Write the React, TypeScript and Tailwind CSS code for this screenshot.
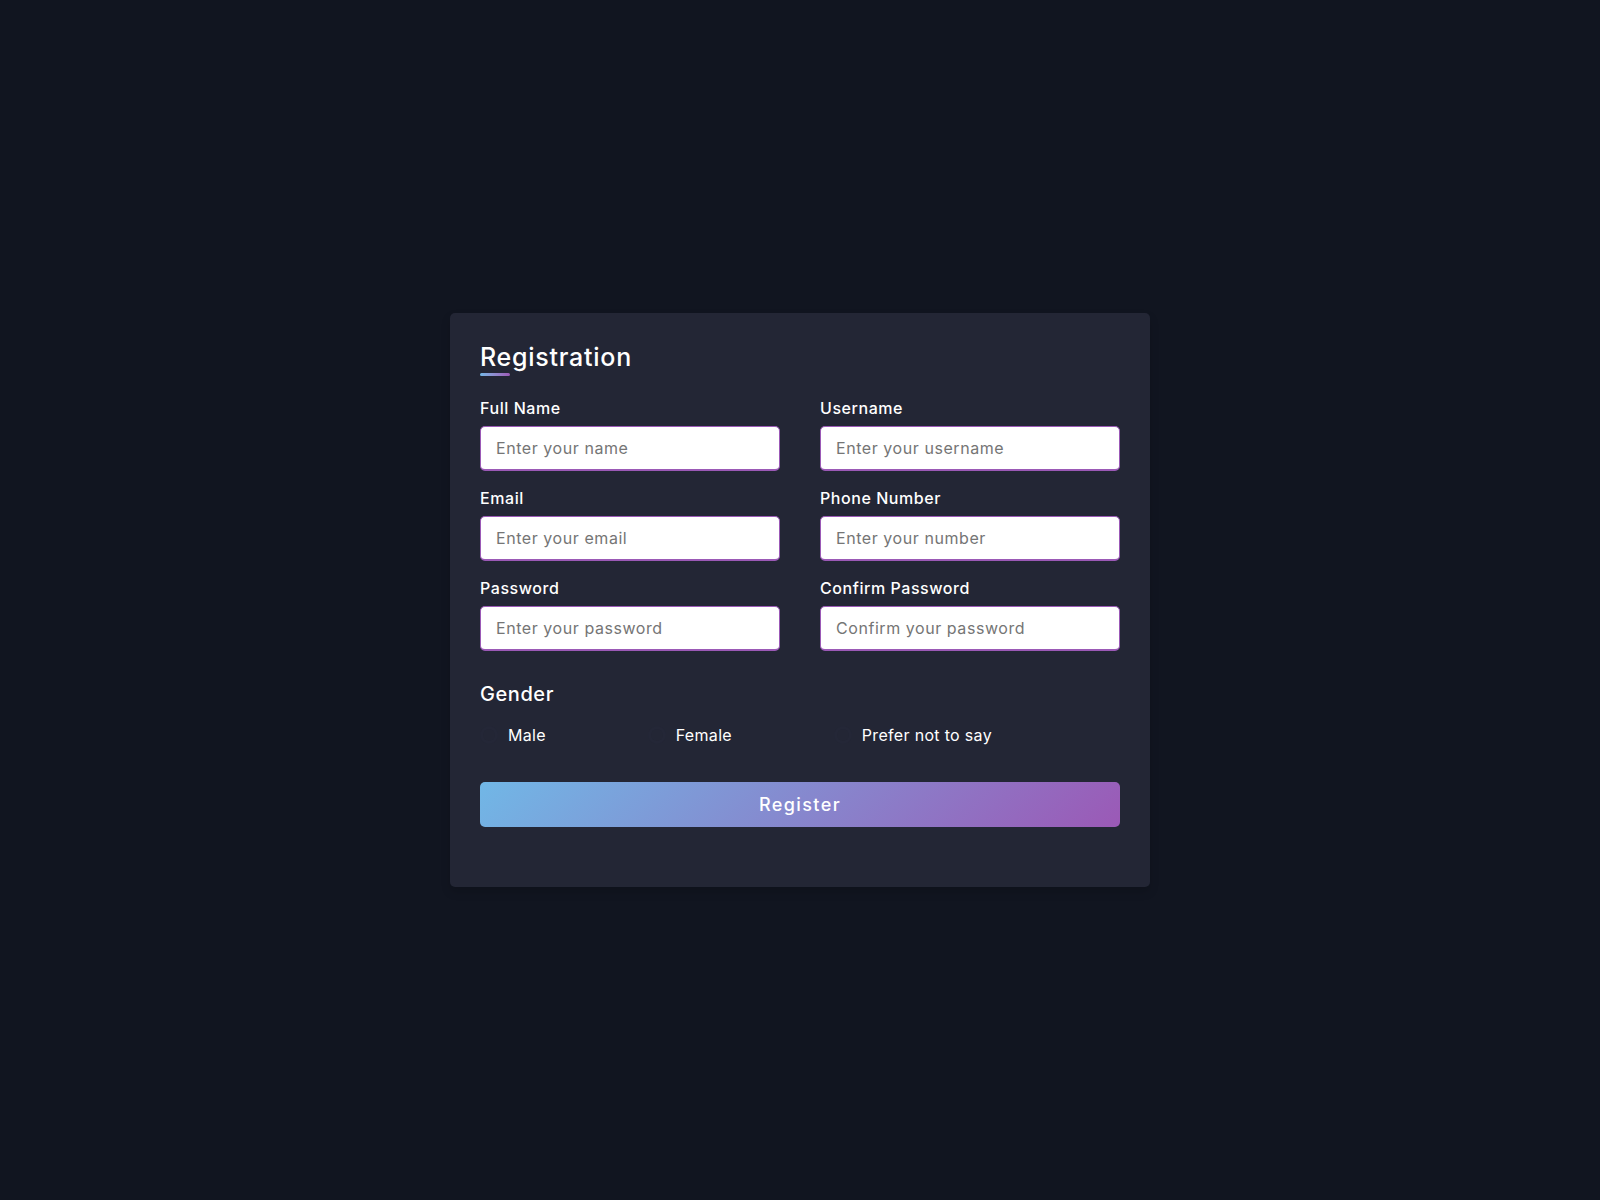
import React from 'react'

// ---------------------------------------------------------------------------
// Data
// ---------------------------------------------------------------------------

const FIELDS = [
  { label: 'Full Name', placeholder: 'Enter your name', type: 'text' },
  { label: 'Username', placeholder: 'Enter your username', type: 'text' },
  { label: 'Email', placeholder: 'Enter your email', type: 'email' },
  { label: 'Phone Number', placeholder: 'Enter your number', type: 'text' },
  { label: 'Password', placeholder: 'Enter your password', type: 'password' },
  { label: 'Confirm Password', placeholder: 'Confirm your password', type: 'password' },
]

const GENDERS = ['Male', 'Female', 'Prefer not to say']

// ---------------------------------------------------------------------------
// Component
// ---------------------------------------------------------------------------

export default function App() {
  return (
    <div className="flex min-h-screen items-center justify-center bg-[#111520] font-['Inter','Noto_Sans',sans-serif] tracking-[0.035em]">
      <div className="w-[700px] rounded-[5px] bg-[#232635] px-[30px] pt-[25px] pb-[25px] shadow-[0_5px_10px_rgba(0,0,0,0.15)]">
        {/* Title */}
        <div className="relative text-[25px] font-medium leading-[38px] tracking-[0.03em] text-white">
          Registration
          <span className="absolute bottom-0 left-0 h-[3px] w-[30px] rounded-[5px] bg-gradient-to-r from-[#71b7e6] to-[#9b59b6]" />
        </div>

        <form onSubmit={(e) => e.preventDefault()}>
          {/* User details */}
          <div className="mt-[20px] mb-[13px] flex flex-wrap justify-between">
            {FIELDS.map((f) => (
              <div key={f.label} className="mb-[15px] w-[300px]">
                <label className="mb-[5px] block text-[16px] font-medium leading-[25px] text-white">
                  {f.label}
                </label>
                <input
                  type={f.type}
                  placeholder={f.placeholder}
                  className="h-[45px] w-full rounded-[5px] border border-b-2 border-[#9b59b6] bg-white pl-[15px] text-[16px] tracking-[0.035em] text-gray-800 outline-none placeholder:text-[#757575]"
                />
              </div>
            ))}
          </div>

          {/* Gender */}
          <div className="text-[20px] font-medium leading-[30px] text-white">Gender</div>
          <div className="mt-[14px] flex w-[80%] justify-between">
            {GENDERS.map((g) => (
              <label key={g} className="flex cursor-pointer items-center text-[16px] leading-[24px] tracking-[0.02em] text-white">
                <span className="mr-[10px] h-[18px] w-[18px] rounded-full border-[3px] border-[#242737]" />
                {g}
              </label>
            ))}
          </div>

          {/* Button */}
          <button
            type="submit"
            className="mt-[35px] h-[45px] w-full rounded-[5px] bg-[linear-gradient(135deg,#71b7e6,#9b59b6)] text-[18px] font-medium tracking-[1.4px] text-white"
          >
            Register
          </button>
          <div className="h-[35px]" />
        </form>
      </div>
    </div>
  )
}
